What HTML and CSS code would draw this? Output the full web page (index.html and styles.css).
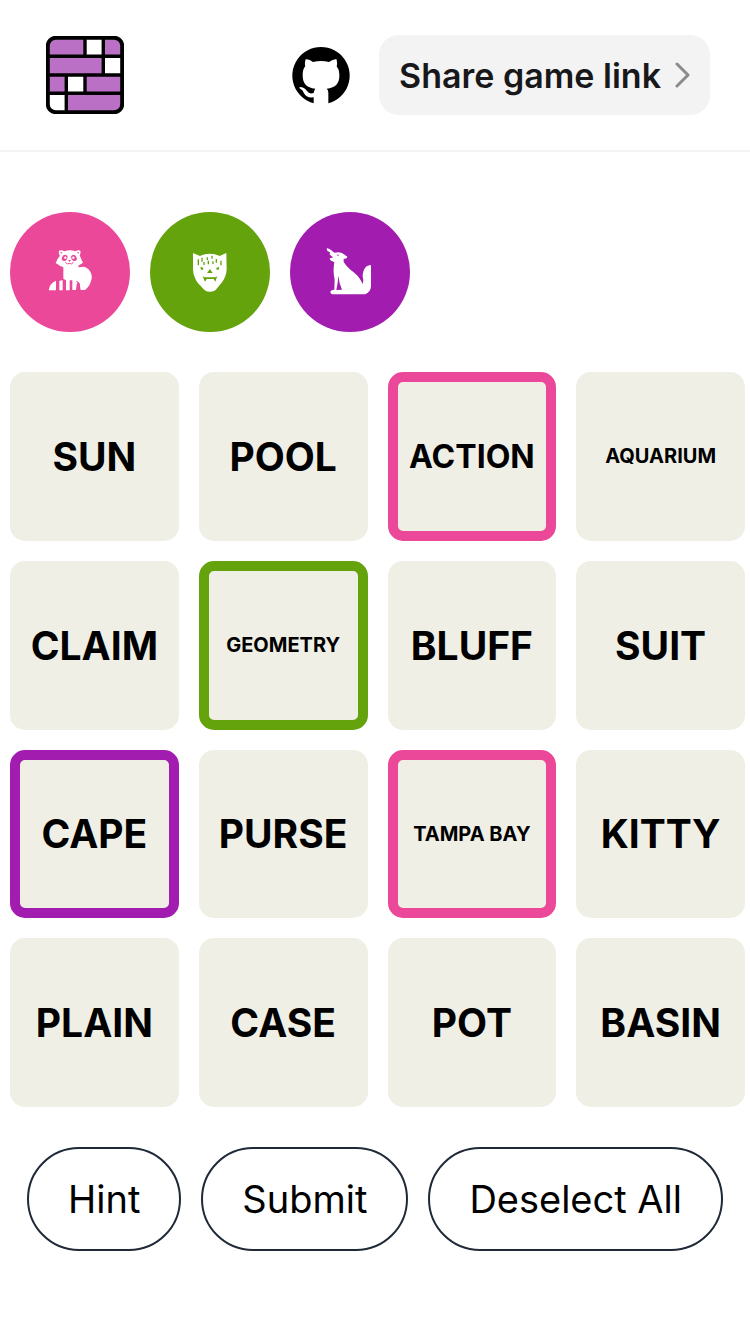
FILE: index.html
```html
<!DOCTYPE html>
<html lang="en">
<head>
<meta charset="utf-8">
<meta name="viewport" content="width=device-width, initial-scale=1">
<title>Word groups</title>
<link rel="stylesheet" href="styles.css">
</head>
<body>
<header class="header">
  <a class="logo" href="#" aria-label="Home">
    <svg class="logo-art" viewBox="0 0 78 78" aria-hidden="true">
      <defs><clipPath id="logo-clip"><rect x="1" y="1" width="76" height="76" rx="9"/></clipPath></defs>
      <g clip-path="url(#logo-clip)">
        <rect width="78" height="78" fill="#ba70c5"/>
        <path fill="#fff" d="M39 2h18v18H39zM57 20h19v18H57zM20 38h18v18H20zM2 56h18v20H2z"/>
        <path fill="none" stroke="#000" stroke-width="3.400" d="M2 20.300h74M2 39h74M2 57.300h74M39 2v18M57.300 2v37M20.300 39v37M39 39v18"/>
      </g>
      <rect x="1.800" y="1.800" width="74.400" height="74.400" rx="8" fill="none" stroke="#000" stroke-width="4"/>
    </svg>
  </a>
  <div class="header-actions">
    <a class="github" href="#" aria-label="GitHub">
      <svg class="github-art" viewBox="7 5 174 174" aria-hidden="true"><path d="M72 177A86 86 0 1 1 116 177V145Q116 136 111 133C140 130 150 115 149 90Q148 74 141 66Q144 55 140 44Q128 45 118 53Q94 47 70 53Q58 43 48 45Q44 57 47 66Q39 74 39 92C39 118 50 130 77 133Q73 138 72 146Q58 150 52 140Q44 128 30 128Q28 132 33 134Q40 138 43 147Q50 162 72 159z"/></svg>
    </a>
    <button class="share" type="button">Share game link
      <svg class="share-arrow" viewBox="0 0 16 26" aria-hidden="true"><path d="M2 2l11 11L2 24"/></svg>
    </button>
  </div>
</header>
<main class="game">
  <div class="players">
    <div class="player player-pink">
      <svg class="player-art" viewBox="0 6 180 180" role="img" aria-label="Raccoon">
        <path fill="#fff" d="M57 32Q64 28 73 34Q90 28 106 34Q116 28 121 32Q123 40 119 46L126 62L129 68L115 77Q114 81 118 82Q139 76 150 94Q159 108 153 123Q149 139 135 150H122L120 138Q120 128 113 125Q109 133 108 150H97V121H89V151H78V121L70 116V82L61 78L47 69L54 55Q60 50 59 46Q55 39 57 32zM68 121V151H58V123Q63 120 68 121zM48 122V151H26Q29 130 48 122z"/>
        <path fill="#ec4899" d="M61 36l6 1-4 5zM117 36l-6 1 4 5zM71 45q8-3 12 4 0 10-6 13-10 3-12-4 0-8 6-13zM104 45q-7-2-11 4 0 10 6 13 10 3 12-4 0-8-7-13zM84 60h9l-4 6z"/>
        <path fill="none" stroke="#ec4899" stroke-width="3" d="M76 67q6 8 12 3q6 5 13-3M119 138q-1-13-10-14"/>
        <circle cx="76" cy="53" r="3.500" fill="#fff"/><circle cx="100" cy="53" r="3.500" fill="#fff"/>
      </svg>
    </div>
    <div class="player player-green">
      <svg class="player-art" viewBox="0 6 180 180" role="img" aria-label="Wildcat">
        <path fill="#fff" d="M39 39L60 48Q89 34 119 48L139 39L140 88Q139 111 125 128L106 151Q90 160 74 151L53 128Q40 111 39 88z"/>
        <path fill="none" stroke="#65a30d" stroke-width="4" d="M55 58v18M66 53v12M72 66v9M82 52v8M85 62v11M96 47v9M99 64v8M109 57v11M123 62v14"/>
        <path fill="#65a30d" d="M61 81l9 2-1 6h-6zM109 83l9-2-2 8h-6zM90 87l8 12H81zM68 109l6 3h32l6-3-3 7-3 9-5-8H80l-5 8-4-9z"/>
      </svg>
    </div>
    <div class="player player-purple">
      <svg class="player-art" viewBox="0 6 180 180" role="img" aria-label="Wolf">
        <path fill="#fff" d="M20 25Q24 23 33 30L43 38L55 37L66 39L82 50Q81 56 71 56V66Q79 79 92 90Q113 104 122 121Q127 128 127 132Q132 125 128 110Q128 91 138 80Q145 75 153 75V139Q152 157 135 163H37Q29 160 32 153Q37 149 43 149L44 119Q38 94 43 67L31 61L29 55L40 52L33 47L29 43L30 37L22 33z"/>
        <path fill="#a21caf" d="M55 107Q57 129 66 149L49 150Q54 126 55 107zM52 43l6 2-5 3z"/>
      </svg>
    </div>
  </div>
  <div class="board">
    <button class="tile" type="button">SUN</button>
    <button class="tile" type="button">POOL</button>
    <button class="tile tile-medium picked-pink" type="button">ACTION</button>
    <button class="tile tile-small" type="button">AQUARIUM</button>
    <button class="tile" type="button">CLAIM</button>
    <button class="tile tile-small picked-green" type="button">GEOMETRY</button>
    <button class="tile" type="button">BLUFF</button>
    <button class="tile" type="button">SUIT</button>
    <button class="tile picked-purple" type="button">CAPE</button>
    <button class="tile" type="button">PURSE</button>
    <button class="tile tile-small picked-pink" type="button">TAMPA BAY</button>
    <button class="tile" type="button">KITTY</button>
    <button class="tile" type="button">PLAIN</button>
    <button class="tile" type="button">CASE</button>
    <button class="tile" type="button">POT</button>
    <button class="tile" type="button">BASIN</button>
  </div>
  <div class="controls">
    <button class="control" type="button">Hint</button>
    <button class="control" type="button">Submit</button>
    <button class="control" type="button">Deselect All</button>
  </div>
</main>
</body>
</html>
```

FILE: styles.css
```css
* {
  box-sizing: border-box;
}

body {
  margin: 0;
  background: #fff;
  color: #000;
  font-family: Inter, "Liberation Sans", sans-serif;
}

button {
  margin: 0;
  font-family: inherit;
  color: inherit;
  cursor: pointer;
}

svg {
  display: block;
}

.header {
  display: flex;
  align-items: center;
  justify-content: space-between;
  padding: 35px 40px;
  border-bottom: 2px solid #f3f3f3;
}

.logo {
  padding-left: 6px;
}

.logo-art {
  width: 78px;
  height: 78px;
}

.header-actions {
  display: flex;
  align-items: center;
  gap: 29px;
}

.github {
  color: #000;
}

.github-art {
  width: 58px;
  height: 58px;
  fill: currentColor;
}

.share {
  display: flex;
  align-items: center;
  gap: 14px;
  height: 80px;
  padding: 0 19px 0 20px;
  border: 0;
  border-radius: 20px;
  background: #f3f3f3;
  color: #18181b;
  font-size: 34px;
  font-weight: 600;
  white-space: nowrap;
}

.share-arrow {
  width: 16px;
  height: 26px;
  fill: none;
  stroke: #8b8b8b;
  stroke-width: 3;
  stroke-linecap: round;
  stroke-linejoin: round;
}

.game {
  display: flex;
  flex-direction: column;
  gap: 40px;
  padding: 60px 5px 80px 10px;
}

.players {
  display: flex;
  gap: 20px;
}

.player {
  display: flex;
  align-items: center;
  justify-content: center;
  width: 120px;
  height: 120px;
  border-radius: 50%;
}

.player-pink {
  background: #ec4899;
}

.player-green {
  background: #65a30d;
}

.player-purple {
  background: #a21caf;
}

.player-art {
  width: 60px;
  height: 60px;
}

.board {
  display: grid;
  grid-template-columns: repeat(4, minmax(0, 1fr));
  gap: 20px;
}

.tile {
  display: flex;
  align-items: center;
  justify-content: center;
  aspect-ratio: 1;
  padding: 0;
  border: 10px solid #efefe6;
  border-radius: 15px;
  background: #efefe6;
  font-size: 39px;
  font-weight: 700;
  white-space: nowrap;
}

.tile-medium {
  font-size: 32px;
}

.tile-small {
  font-size: 20px;
}

.picked-pink {
  border-color: #ec4899;
}

.picked-green {
  border-color: #65a30d;
}

.picked-purple {
  border-color: #a21caf;
}

.controls {
  display: flex;
  justify-content: center;
  gap: 20px;
  padding-right: 5px;
}

.control {
  height: 104px;
  padding: 0 39px;
  border: 2px solid #1f2937;
  border-radius: 52px;
  background: #fff;
  font-size: 38px;
  font-weight: 400;
  white-space: nowrap;
}
```
